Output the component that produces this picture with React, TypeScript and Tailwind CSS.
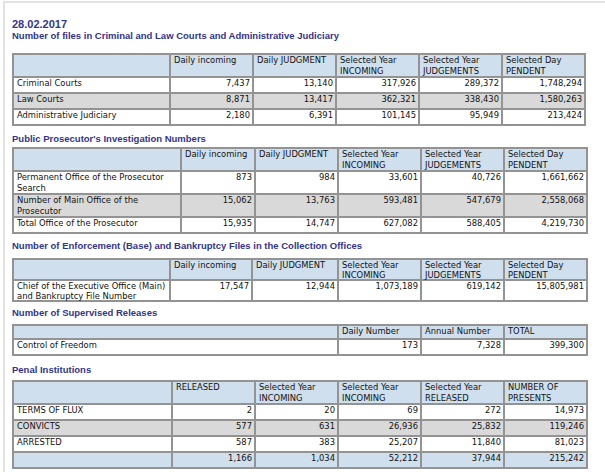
import React from 'react';

type Row = { label: React.ReactNode; values: string[]; gray?: boolean; total?: boolean; tall?: boolean };

const HEAD_BG = 'bg-[#cfdfee]';
const GRAY_BG = 'bg-[#d9d9d9]';

function Heading({ children, className = '' }: { children: React.ReactNode; className?: string }) {
  return (
    <div className={`font-bold text-[9.5px] leading-[12px] text-[#34348a] ${className}`} style={{ fontFamily: '"Liberation Sans", Arial, sans-serif' }}>
      {children}
    </div>
  );
}

function DataTable({
  widths,
  headers,
  rows,
  tallHead = true,
  compact = false,
}: {
  widths: number[];
  headers: React.ReactNode[];
  rows: Row[];
  tallHead?: boolean;
  compact?: boolean;
}) {
  const total = widths.reduce((a, b) => a + b, 0);
  return (
    <table
      className={`table-fixed border-separate border-spacing-0 border border-[#939393] text-[9.3px] text-[#111] ${compact ? 'leading-[9.5px]' : 'leading-[10.5px]'}`}
      style={{ width: total, fontFamily: '"DejaVu Sans Condensed", "DejaVu Sans", sans-serif', fontStretch: 'condensed' }}
    >
      <colgroup>
        {widths.map((w, i) => (
          <col key={i} style={{ width: i === 0 ? w - 1 : w }} />
        ))}
      </colgroup>
      <thead>
        <tr className={tallHead ? 'h-[21px]' : 'h-[14px]'}>
          {headers.map((h, i) => (
            <th
              key={i}
              className={`${HEAD_BG} border border-[#939393] px-[3px] py-0 text-left align-top font-normal whitespace-nowrap`}
            >
              {h}
            </th>
          ))}
        </tr>
      </thead>
      <tbody>
        {rows.map((r, ri) => (
          <tr key={ri} className={r.tall ? 'h-[21px]' : 'h-[16px]'}>
            <td
              className={`${r.total ? HEAD_BG : r.gray ? GRAY_BG : 'bg-white'} border border-[#939393] px-[3px] py-0 align-top whitespace-nowrap`}
            >
              {r.label}
            </td>
            {r.values.map((v, vi) => (
              <td
                key={vi}
                className={`${r.total ? HEAD_BG : r.gray ? GRAY_BG : 'bg-white'} border border-[#939393] px-[2px] py-0 text-right align-top whitespace-nowrap`}
              >
                {v}
              </td>
            ))}
          </tr>
        ))}
      </tbody>
    </table>
  );
}

const twoLine = (a: string, b: string) => (
  <>
    {a}
    <br />
    {b}
  </>
);

const courtHeaders = [
  '',
  'Daily incoming',
  'Daily JUDGMENT',
  twoLine('Selected Year', 'INCOMING'),
  twoLine('Selected Year', 'JUDGEMENTS'),
  twoLine('Selected Day', 'PENDENT'),
];

export default function App() {
  return (
    <div className="min-h-[472px] w-[605px] bg-white">
      <div className="ml-[3px] mt-[1px] border-l-2 border-t-2 border-[#e2e2e2] pl-[7px] pt-[15px] pb-[6px]">
        <div className="font-bold text-[11px] leading-[12px] text-[#34348a]" style={{ fontFamily: '"Liberation Sans", Arial, sans-serif' }}>
          28.02.2017
        </div>
        <Heading className="leading-[11px]">Number of files in Criminal and Law Courts and Administrative Judiciary</Heading>

        <div className="mt-[11px]">
          <DataTable
            widths={[158, 83, 83, 83, 83, 83]}
            headers={courtHeaders}
            rows={[
              { label: 'Criminal Courts', values: ['7,437', '13,140', '317,926', '289,372', '1,748,294'] },
              { label: 'Law Courts', values: ['8,871', '13,417', '362,321', '338,430', '1,580,263'], gray: true },
              { label: 'Administrative Judiciary', values: ['2,180', '6,391', '101,145', '95,949', '213,424'] },
            ]}
          />
        </div>

        <Heading className="mt-[7px] mb-[2px]">Public Prosecutor's Investigation Numbers</Heading>
        <DataTable
          widths={[169, 74, 83, 83, 83, 83]}
          headers={courtHeaders}
          rows={[
            { label: twoLine('Permanent Office of the Prosecutor', 'Search'), values: ['873', '984', '33,601', '40,726', '1,661,662'], tall: true },
            { label: twoLine('Number of Main Office of the', 'Prosecutor'), values: ['15,062', '13,763', '593,481', '547,679', '2,558,068'], gray: true, tall: true },
            { label: 'Total Office of the Prosecutor', values: ['15,935', '14,747', '627,082', '588,405', '4,219,730'] },
          ]}
        />

        <Heading className="mt-[6px] mb-[6px]">
          Number of Enforcement (Base) and Bankruptcy Files in the Collection Offices
        </Heading>
        <DataTable
          widths={[158, 82, 86, 83, 83, 83]}
          headers={courtHeaders}
          compact
          rows={[
            {
              label: twoLine('Chief of the Executive Office (Main)', 'and Bankruptcy File Number'),
              values: ['17,547', '12,944', '1,073,189', '619,142', '15,805,981'],
              tall: true,
            },
          ]}
        />

        <Heading className="mt-[5px] mb-[5px]">Number of Supervised Releases</Heading>
        <DataTable
          widths={[326, 83, 83, 83]}
          tallHead={false}
          headers={['', 'Daily Number', 'Annual Number', 'TOTAL']}
          rows={[{ label: 'Control of Freedom', values: ['173', '7,328', '399,300'] }]}
        />

        <Heading className="mt-[8px] mb-[4px]">Penal Institutions</Heading>
        <DataTable
          widths={[160, 83, 83, 83, 83, 83]}
          headers={[
            '',
            'RELEASED',
            twoLine('Selected Year', 'INCOMING'),
            twoLine('Selected Year', 'INCOMING'),
            twoLine('Selected Year', 'RELEASED'),
            twoLine('NUMBER OF', 'PRESENTS'),
          ]}
          rows={[
            { label: 'TERMS OF FLUX', values: ['2', '20', '69', '272', '14,973'] },
            { label: 'CONVICTS', values: ['577', '631', '26,936', '25,832', '119,246'], gray: true },
            { label: 'ARRESTED', values: ['587', '383', '25,207', '11,840', '81,023'] },
            { label: '', values: ['1,166', '1,034', '52,212', '37,944', '215,242'], total: true },
          ]}
        />
      </div>
    </div>
  );
}
